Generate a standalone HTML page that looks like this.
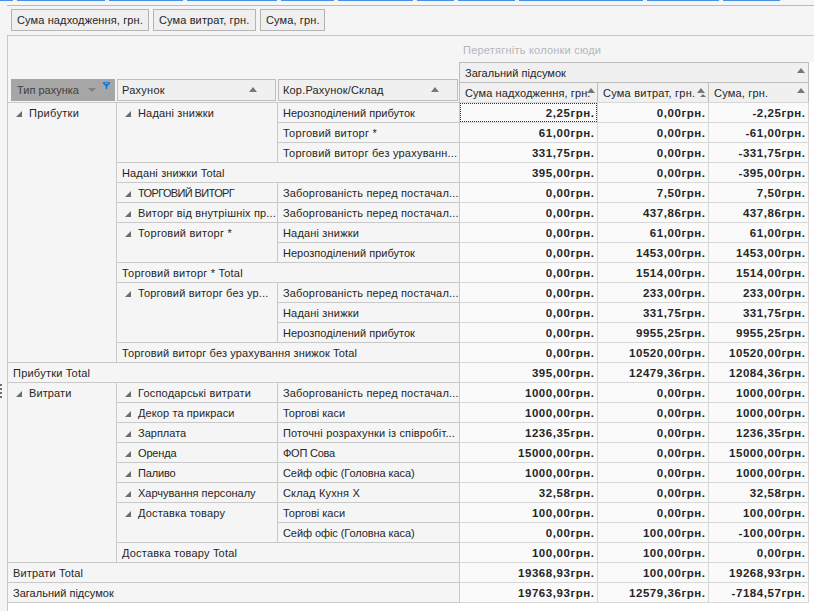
<!DOCTYPE html>
<html><head><meta charset="utf-8">
<style>
html,body{margin:0;padding:0}
body{width:814px;height:611px;position:relative;overflow:hidden;background:#f5f5f5;font-family:"Liberation Sans",sans-serif;font-size:11px;color:#262626}
div{position:absolute;box-sizing:border-box}
.l{}
.t{height:19px;line-height:21px;white-space:nowrap;letter-spacing:0.1px}
.n{height:19px;line-height:21px;white-space:nowrap;font-weight:bold;font-size:11.5px;letter-spacing:0.55px;margin-right:-0.55px}
.exw{width:6px;height:6px}
.ex{display:block}
.blue{top:0;height:1px;background:#4a91e2}
.btn{top:9px;height:22px;border:1px solid #b4b4b4;background:#efefef;line-height:20px;padding-left:5px;white-space:nowrap;letter-spacing:0.12px}
.hdr{height:22px;border:1px solid #bdbdbd;background:#f0f0f0;line-height:21px;padding-left:5px;white-space:nowrap}
.up{width:0;height:0;border-left:4.5px solid transparent;border-right:4.5px solid transparent;border-bottom:5px solid #777}
</style></head><body>
<div class="blue" style="left:0px;width:13px"></div>
<div class="blue" style="left:17px;width:88px"></div>
<div class="blue" style="left:109px;width:74px"></div>
<div class="blue" style="left:187px;width:90px"></div>
<div class="blue" style="left:281px;width:53px"></div>
<div class="blue" style="left:338px;width:75px"></div>
<div class="blue" style="left:417px;width:37px"></div>
<div class="blue" style="left:458px;width:57px"></div>
<div class="blue" style="left:519px;width:124px"></div>
<div class="blue" style="left:647px;width:72px"></div>
<div class="blue" style="left:723px;width:57px"></div>
<div style="left:7px;top:5px;width:807px;height:1px;background:#b9b9b9"></div>
<div class="btn" style="left:11px;width:138px">Сума надходження, грн.</div>
<div class="btn" style="left:153px;width:103px">Сума витрат, грн.</div>
<div class="btn" style="left:260px;width:65px">Сума, грн.</div>
<div style="left:7px;top:35px;width:807px;height:1px;background:#c8c8c8"></div>
<div style="left:7px;top:35px;width:1px;height:576px;background:#c8c8c8"></div>
<div style="left:8px;top:603px;width:806px;height:8px;background:#fff"></div>
<div style="left:809px;top:62px;width:5px;height:541px;background:#fff"></div>
<div style="left:460px;top:103px;width:348px;height:499px;background:#fafafa"></div>
<div style="left:463px;top:41px;line-height:19px;height:19px;color:#b6b6be;letter-spacing:0.22px;white-space:nowrap">Перетягніть колонки сюди</div>
<div style="left:11px;top:79px;width:104px;height:22px;background:#a6a6a6;line-height:22px;padding-left:6px;color:#404040">Тип рахунка</div>
<div style="left:88px;top:88px;width:0;height:0;border-left:4.5px solid transparent;border-right:4.5px solid transparent;border-top:4.7px solid #808080"></div>
<svg style="position:absolute;left:102px;top:81px" width="10" height="10" viewBox="0 0 10 10"><path d="M1.2 2.6 L7.8 2.6 L5.2 5.4 L3.8 5.4 Z" fill="#0f79d6"/><ellipse cx="4.5" cy="2.2" rx="3.7" ry="1.35" fill="#0f79d6"/><ellipse cx="4.5" cy="2.05" rx="2.2" ry="0.5" fill="#8dbbe8"/><rect x="3.8" y="5" width="1.4" height="3.1" fill="#0f79d6"/></svg>
<div class="hdr" style="left:117px;top:79px;width:159px;padding-left:4px;letter-spacing:0.25px">Рахунок</div>
<div class="up" style="left:249px;top:87px"></div>
<div class="hdr" style="left:278px;top:79px;width:180px;padding-left:4px;letter-spacing:0.17px">Кор.Рахунок/Склад</div>
<div class="up" style="left:431px;top:87px"></div>
<div style="left:459px;top:62px;width:350px;height:41px;background:#f0f0f0;border:1px solid #bdbdbd"></div>
<div style="left:459px;top:82px;width:350px;height:1px;background:#bdbdbd"></div>
<div style="left:597px;top:82px;width:1px;height:21px;background:#bdbdbd"></div>
<div style="left:708px;top:82px;width:1px;height:21px;background:#bdbdbd"></div>
<div class="t" style="left:465px;top:63px;letter-spacing:0.03px">Загальний підсумок</div>
<div class="up" style="left:797px;top:68px"></div>
<div class="t" style="left:465px;top:83px">Сума надходження, грн.</div>
<div class="up" style="left:587px;top:88px"></div>
<div class="t" style="left:603px;top:83px;letter-spacing:0.235px">Сума витрат, грн.</div>
<div class="up" style="left:697px;top:88px"></div>
<div style="left:699.5px;top:94px;width:0;height:0;border-left:3px solid transparent;border-right:3px solid transparent;border-bottom:3px solid #777"></div>
<div class="t" style="left:714px;top:83px;letter-spacing:0.2px">Сума, грн.</div>
<div class="up" style="left:797px;top:88px"></div>
<div style="left:0;top:384px;width:2px;height:2px;background:#707070"></div>
<div style="left:0;top:388px;width:2px;height:2px;background:#707070"></div>
<div style="left:0;top:392px;width:2px;height:2px;background:#707070"></div>
<div style="left:0;top:396px;width:2px;height:2px;background:#707070"></div>
<div class="l" style="left:7px;top:102px;width:453px;height:1px;background:#c9c9c9"></div>
<div class="l" style="left:460px;top:102px;width:349px;height:1px;background:#d7d7d7"></div>
<div class="l" style="left:277px;top:122px;width:183px;height:1px;background:#c9c9c9"></div>
<div class="l" style="left:460px;top:122px;width:349px;height:1px;background:#d7d7d7"></div>
<div class="l" style="left:277px;top:142px;width:183px;height:1px;background:#c9c9c9"></div>
<div class="l" style="left:460px;top:142px;width:349px;height:1px;background:#d7d7d7"></div>
<div class="l" style="left:116px;top:162px;width:344px;height:1px;background:#c9c9c9"></div>
<div class="l" style="left:460px;top:162px;width:349px;height:1px;background:#d7d7d7"></div>
<div class="l" style="left:116px;top:182px;width:344px;height:1px;background:#c9c9c9"></div>
<div class="l" style="left:460px;top:182px;width:349px;height:1px;background:#d7d7d7"></div>
<div class="l" style="left:116px;top:202px;width:344px;height:1px;background:#c9c9c9"></div>
<div class="l" style="left:460px;top:202px;width:349px;height:1px;background:#d7d7d7"></div>
<div class="l" style="left:116px;top:222px;width:344px;height:1px;background:#c9c9c9"></div>
<div class="l" style="left:460px;top:222px;width:349px;height:1px;background:#d7d7d7"></div>
<div class="l" style="left:277px;top:242px;width:183px;height:1px;background:#c9c9c9"></div>
<div class="l" style="left:460px;top:242px;width:349px;height:1px;background:#d7d7d7"></div>
<div class="l" style="left:116px;top:262px;width:344px;height:1px;background:#c9c9c9"></div>
<div class="l" style="left:460px;top:262px;width:349px;height:1px;background:#d7d7d7"></div>
<div class="l" style="left:116px;top:282px;width:344px;height:1px;background:#c9c9c9"></div>
<div class="l" style="left:460px;top:282px;width:349px;height:1px;background:#d7d7d7"></div>
<div class="l" style="left:277px;top:302px;width:183px;height:1px;background:#c9c9c9"></div>
<div class="l" style="left:460px;top:302px;width:349px;height:1px;background:#d7d7d7"></div>
<div class="l" style="left:277px;top:322px;width:183px;height:1px;background:#c9c9c9"></div>
<div class="l" style="left:460px;top:322px;width:349px;height:1px;background:#d7d7d7"></div>
<div class="l" style="left:116px;top:342px;width:344px;height:1px;background:#c9c9c9"></div>
<div class="l" style="left:460px;top:342px;width:349px;height:1px;background:#d7d7d7"></div>
<div class="l" style="left:7px;top:362px;width:453px;height:1px;background:#c9c9c9"></div>
<div class="l" style="left:460px;top:362px;width:349px;height:1px;background:#d7d7d7"></div>
<div class="l" style="left:7px;top:382px;width:453px;height:1px;background:#c9c9c9"></div>
<div class="l" style="left:460px;top:382px;width:349px;height:1px;background:#d7d7d7"></div>
<div class="l" style="left:116px;top:402px;width:344px;height:1px;background:#c9c9c9"></div>
<div class="l" style="left:460px;top:402px;width:349px;height:1px;background:#d7d7d7"></div>
<div class="l" style="left:116px;top:422px;width:344px;height:1px;background:#c9c9c9"></div>
<div class="l" style="left:460px;top:422px;width:349px;height:1px;background:#d7d7d7"></div>
<div class="l" style="left:116px;top:442px;width:344px;height:1px;background:#c9c9c9"></div>
<div class="l" style="left:460px;top:442px;width:349px;height:1px;background:#d7d7d7"></div>
<div class="l" style="left:116px;top:462px;width:344px;height:1px;background:#c9c9c9"></div>
<div class="l" style="left:460px;top:462px;width:349px;height:1px;background:#d7d7d7"></div>
<div class="l" style="left:116px;top:482px;width:344px;height:1px;background:#c9c9c9"></div>
<div class="l" style="left:460px;top:482px;width:349px;height:1px;background:#d7d7d7"></div>
<div class="l" style="left:116px;top:502px;width:344px;height:1px;background:#c9c9c9"></div>
<div class="l" style="left:460px;top:502px;width:349px;height:1px;background:#d7d7d7"></div>
<div class="l" style="left:277px;top:522px;width:183px;height:1px;background:#c9c9c9"></div>
<div class="l" style="left:460px;top:522px;width:349px;height:1px;background:#d7d7d7"></div>
<div class="l" style="left:116px;top:542px;width:344px;height:1px;background:#c9c9c9"></div>
<div class="l" style="left:460px;top:542px;width:349px;height:1px;background:#d7d7d7"></div>
<div class="l" style="left:7px;top:562px;width:453px;height:1px;background:#c9c9c9"></div>
<div class="l" style="left:460px;top:562px;width:349px;height:1px;background:#d7d7d7"></div>
<div class="l" style="left:7px;top:582px;width:453px;height:1px;background:#c9c9c9"></div>
<div class="l" style="left:460px;top:582px;width:349px;height:1px;background:#d7d7d7"></div>
<div class="l" style="left:7px;top:602px;width:453px;height:1px;background:#c9c9c9"></div>
<div class="l" style="left:460px;top:602px;width:349px;height:1px;background:#d7d7d7"></div>
<div class="l" style="left:7px;top:102px;width:1px;height:21px;background:#c9c9c9"></div>
<div class="l" style="left:116px;top:102px;width:1px;height:21px;background:#c9c9c9"></div>
<div class="l" style="left:277px;top:102px;width:1px;height:21px;background:#c9c9c9"></div>
<div class="l" style="left:459px;top:102px;width:1px;height:21px;background:#c8c8c8"></div>
<div class="l" style="left:597px;top:102px;width:1px;height:21px;background:#d7d7d7"></div>
<div class="l" style="left:708px;top:102px;width:1px;height:21px;background:#d7d7d7"></div>
<div class="l" style="left:808px;top:102px;width:1px;height:21px;background:#d7d7d7"></div>
<div class="l" style="left:7px;top:122px;width:1px;height:21px;background:#c9c9c9"></div>
<div class="l" style="left:116px;top:122px;width:1px;height:21px;background:#c9c9c9"></div>
<div class="l" style="left:277px;top:122px;width:1px;height:21px;background:#c9c9c9"></div>
<div class="l" style="left:459px;top:122px;width:1px;height:21px;background:#c8c8c8"></div>
<div class="l" style="left:597px;top:122px;width:1px;height:21px;background:#d7d7d7"></div>
<div class="l" style="left:708px;top:122px;width:1px;height:21px;background:#d7d7d7"></div>
<div class="l" style="left:808px;top:122px;width:1px;height:21px;background:#d7d7d7"></div>
<div class="l" style="left:7px;top:142px;width:1px;height:21px;background:#c9c9c9"></div>
<div class="l" style="left:116px;top:142px;width:1px;height:21px;background:#c9c9c9"></div>
<div class="l" style="left:277px;top:142px;width:1px;height:21px;background:#c9c9c9"></div>
<div class="l" style="left:459px;top:142px;width:1px;height:21px;background:#c8c8c8"></div>
<div class="l" style="left:597px;top:142px;width:1px;height:21px;background:#d7d7d7"></div>
<div class="l" style="left:708px;top:142px;width:1px;height:21px;background:#d7d7d7"></div>
<div class="l" style="left:808px;top:142px;width:1px;height:21px;background:#d7d7d7"></div>
<div class="l" style="left:7px;top:162px;width:1px;height:21px;background:#c9c9c9"></div>
<div class="l" style="left:116px;top:162px;width:1px;height:21px;background:#c9c9c9"></div>
<div class="l" style="left:459px;top:162px;width:1px;height:21px;background:#c8c8c8"></div>
<div class="l" style="left:597px;top:162px;width:1px;height:21px;background:#d7d7d7"></div>
<div class="l" style="left:708px;top:162px;width:1px;height:21px;background:#d7d7d7"></div>
<div class="l" style="left:808px;top:162px;width:1px;height:21px;background:#d7d7d7"></div>
<div class="l" style="left:7px;top:182px;width:1px;height:21px;background:#c9c9c9"></div>
<div class="l" style="left:116px;top:182px;width:1px;height:21px;background:#c9c9c9"></div>
<div class="l" style="left:277px;top:182px;width:1px;height:21px;background:#c9c9c9"></div>
<div class="l" style="left:459px;top:182px;width:1px;height:21px;background:#c8c8c8"></div>
<div class="l" style="left:597px;top:182px;width:1px;height:21px;background:#d7d7d7"></div>
<div class="l" style="left:708px;top:182px;width:1px;height:21px;background:#d7d7d7"></div>
<div class="l" style="left:808px;top:182px;width:1px;height:21px;background:#d7d7d7"></div>
<div class="l" style="left:7px;top:202px;width:1px;height:21px;background:#c9c9c9"></div>
<div class="l" style="left:116px;top:202px;width:1px;height:21px;background:#c9c9c9"></div>
<div class="l" style="left:277px;top:202px;width:1px;height:21px;background:#c9c9c9"></div>
<div class="l" style="left:459px;top:202px;width:1px;height:21px;background:#c8c8c8"></div>
<div class="l" style="left:597px;top:202px;width:1px;height:21px;background:#d7d7d7"></div>
<div class="l" style="left:708px;top:202px;width:1px;height:21px;background:#d7d7d7"></div>
<div class="l" style="left:808px;top:202px;width:1px;height:21px;background:#d7d7d7"></div>
<div class="l" style="left:7px;top:222px;width:1px;height:21px;background:#c9c9c9"></div>
<div class="l" style="left:116px;top:222px;width:1px;height:21px;background:#c9c9c9"></div>
<div class="l" style="left:277px;top:222px;width:1px;height:21px;background:#c9c9c9"></div>
<div class="l" style="left:459px;top:222px;width:1px;height:21px;background:#c8c8c8"></div>
<div class="l" style="left:597px;top:222px;width:1px;height:21px;background:#d7d7d7"></div>
<div class="l" style="left:708px;top:222px;width:1px;height:21px;background:#d7d7d7"></div>
<div class="l" style="left:808px;top:222px;width:1px;height:21px;background:#d7d7d7"></div>
<div class="l" style="left:7px;top:242px;width:1px;height:21px;background:#c9c9c9"></div>
<div class="l" style="left:116px;top:242px;width:1px;height:21px;background:#c9c9c9"></div>
<div class="l" style="left:277px;top:242px;width:1px;height:21px;background:#c9c9c9"></div>
<div class="l" style="left:459px;top:242px;width:1px;height:21px;background:#c8c8c8"></div>
<div class="l" style="left:597px;top:242px;width:1px;height:21px;background:#d7d7d7"></div>
<div class="l" style="left:708px;top:242px;width:1px;height:21px;background:#d7d7d7"></div>
<div class="l" style="left:808px;top:242px;width:1px;height:21px;background:#d7d7d7"></div>
<div class="l" style="left:7px;top:262px;width:1px;height:21px;background:#c9c9c9"></div>
<div class="l" style="left:116px;top:262px;width:1px;height:21px;background:#c9c9c9"></div>
<div class="l" style="left:459px;top:262px;width:1px;height:21px;background:#c8c8c8"></div>
<div class="l" style="left:597px;top:262px;width:1px;height:21px;background:#d7d7d7"></div>
<div class="l" style="left:708px;top:262px;width:1px;height:21px;background:#d7d7d7"></div>
<div class="l" style="left:808px;top:262px;width:1px;height:21px;background:#d7d7d7"></div>
<div class="l" style="left:7px;top:282px;width:1px;height:21px;background:#c9c9c9"></div>
<div class="l" style="left:116px;top:282px;width:1px;height:21px;background:#c9c9c9"></div>
<div class="l" style="left:277px;top:282px;width:1px;height:21px;background:#c9c9c9"></div>
<div class="l" style="left:459px;top:282px;width:1px;height:21px;background:#c8c8c8"></div>
<div class="l" style="left:597px;top:282px;width:1px;height:21px;background:#d7d7d7"></div>
<div class="l" style="left:708px;top:282px;width:1px;height:21px;background:#d7d7d7"></div>
<div class="l" style="left:808px;top:282px;width:1px;height:21px;background:#d7d7d7"></div>
<div class="l" style="left:7px;top:302px;width:1px;height:21px;background:#c9c9c9"></div>
<div class="l" style="left:116px;top:302px;width:1px;height:21px;background:#c9c9c9"></div>
<div class="l" style="left:277px;top:302px;width:1px;height:21px;background:#c9c9c9"></div>
<div class="l" style="left:459px;top:302px;width:1px;height:21px;background:#c8c8c8"></div>
<div class="l" style="left:597px;top:302px;width:1px;height:21px;background:#d7d7d7"></div>
<div class="l" style="left:708px;top:302px;width:1px;height:21px;background:#d7d7d7"></div>
<div class="l" style="left:808px;top:302px;width:1px;height:21px;background:#d7d7d7"></div>
<div class="l" style="left:7px;top:322px;width:1px;height:21px;background:#c9c9c9"></div>
<div class="l" style="left:116px;top:322px;width:1px;height:21px;background:#c9c9c9"></div>
<div class="l" style="left:277px;top:322px;width:1px;height:21px;background:#c9c9c9"></div>
<div class="l" style="left:459px;top:322px;width:1px;height:21px;background:#c8c8c8"></div>
<div class="l" style="left:597px;top:322px;width:1px;height:21px;background:#d7d7d7"></div>
<div class="l" style="left:708px;top:322px;width:1px;height:21px;background:#d7d7d7"></div>
<div class="l" style="left:808px;top:322px;width:1px;height:21px;background:#d7d7d7"></div>
<div class="l" style="left:7px;top:342px;width:1px;height:21px;background:#c9c9c9"></div>
<div class="l" style="left:116px;top:342px;width:1px;height:21px;background:#c9c9c9"></div>
<div class="l" style="left:459px;top:342px;width:1px;height:21px;background:#c8c8c8"></div>
<div class="l" style="left:597px;top:342px;width:1px;height:21px;background:#d7d7d7"></div>
<div class="l" style="left:708px;top:342px;width:1px;height:21px;background:#d7d7d7"></div>
<div class="l" style="left:808px;top:342px;width:1px;height:21px;background:#d7d7d7"></div>
<div class="l" style="left:7px;top:362px;width:1px;height:21px;background:#c9c9c9"></div>
<div class="l" style="left:459px;top:362px;width:1px;height:21px;background:#c8c8c8"></div>
<div class="l" style="left:597px;top:362px;width:1px;height:21px;background:#d7d7d7"></div>
<div class="l" style="left:708px;top:362px;width:1px;height:21px;background:#d7d7d7"></div>
<div class="l" style="left:808px;top:362px;width:1px;height:21px;background:#d7d7d7"></div>
<div class="l" style="left:7px;top:382px;width:1px;height:21px;background:#c9c9c9"></div>
<div class="l" style="left:116px;top:382px;width:1px;height:21px;background:#c9c9c9"></div>
<div class="l" style="left:277px;top:382px;width:1px;height:21px;background:#c9c9c9"></div>
<div class="l" style="left:459px;top:382px;width:1px;height:21px;background:#c8c8c8"></div>
<div class="l" style="left:597px;top:382px;width:1px;height:21px;background:#d7d7d7"></div>
<div class="l" style="left:708px;top:382px;width:1px;height:21px;background:#d7d7d7"></div>
<div class="l" style="left:808px;top:382px;width:1px;height:21px;background:#d7d7d7"></div>
<div class="l" style="left:7px;top:402px;width:1px;height:21px;background:#c9c9c9"></div>
<div class="l" style="left:116px;top:402px;width:1px;height:21px;background:#c9c9c9"></div>
<div class="l" style="left:277px;top:402px;width:1px;height:21px;background:#c9c9c9"></div>
<div class="l" style="left:459px;top:402px;width:1px;height:21px;background:#c8c8c8"></div>
<div class="l" style="left:597px;top:402px;width:1px;height:21px;background:#d7d7d7"></div>
<div class="l" style="left:708px;top:402px;width:1px;height:21px;background:#d7d7d7"></div>
<div class="l" style="left:808px;top:402px;width:1px;height:21px;background:#d7d7d7"></div>
<div class="l" style="left:7px;top:422px;width:1px;height:21px;background:#c9c9c9"></div>
<div class="l" style="left:116px;top:422px;width:1px;height:21px;background:#c9c9c9"></div>
<div class="l" style="left:277px;top:422px;width:1px;height:21px;background:#c9c9c9"></div>
<div class="l" style="left:459px;top:422px;width:1px;height:21px;background:#c8c8c8"></div>
<div class="l" style="left:597px;top:422px;width:1px;height:21px;background:#d7d7d7"></div>
<div class="l" style="left:708px;top:422px;width:1px;height:21px;background:#d7d7d7"></div>
<div class="l" style="left:808px;top:422px;width:1px;height:21px;background:#d7d7d7"></div>
<div class="l" style="left:7px;top:442px;width:1px;height:21px;background:#c9c9c9"></div>
<div class="l" style="left:116px;top:442px;width:1px;height:21px;background:#c9c9c9"></div>
<div class="l" style="left:277px;top:442px;width:1px;height:21px;background:#c9c9c9"></div>
<div class="l" style="left:459px;top:442px;width:1px;height:21px;background:#c8c8c8"></div>
<div class="l" style="left:597px;top:442px;width:1px;height:21px;background:#d7d7d7"></div>
<div class="l" style="left:708px;top:442px;width:1px;height:21px;background:#d7d7d7"></div>
<div class="l" style="left:808px;top:442px;width:1px;height:21px;background:#d7d7d7"></div>
<div class="l" style="left:7px;top:462px;width:1px;height:21px;background:#c9c9c9"></div>
<div class="l" style="left:116px;top:462px;width:1px;height:21px;background:#c9c9c9"></div>
<div class="l" style="left:277px;top:462px;width:1px;height:21px;background:#c9c9c9"></div>
<div class="l" style="left:459px;top:462px;width:1px;height:21px;background:#c8c8c8"></div>
<div class="l" style="left:597px;top:462px;width:1px;height:21px;background:#d7d7d7"></div>
<div class="l" style="left:708px;top:462px;width:1px;height:21px;background:#d7d7d7"></div>
<div class="l" style="left:808px;top:462px;width:1px;height:21px;background:#d7d7d7"></div>
<div class="l" style="left:7px;top:482px;width:1px;height:21px;background:#c9c9c9"></div>
<div class="l" style="left:116px;top:482px;width:1px;height:21px;background:#c9c9c9"></div>
<div class="l" style="left:277px;top:482px;width:1px;height:21px;background:#c9c9c9"></div>
<div class="l" style="left:459px;top:482px;width:1px;height:21px;background:#c8c8c8"></div>
<div class="l" style="left:597px;top:482px;width:1px;height:21px;background:#d7d7d7"></div>
<div class="l" style="left:708px;top:482px;width:1px;height:21px;background:#d7d7d7"></div>
<div class="l" style="left:808px;top:482px;width:1px;height:21px;background:#d7d7d7"></div>
<div class="l" style="left:7px;top:502px;width:1px;height:21px;background:#c9c9c9"></div>
<div class="l" style="left:116px;top:502px;width:1px;height:21px;background:#c9c9c9"></div>
<div class="l" style="left:277px;top:502px;width:1px;height:21px;background:#c9c9c9"></div>
<div class="l" style="left:459px;top:502px;width:1px;height:21px;background:#c8c8c8"></div>
<div class="l" style="left:597px;top:502px;width:1px;height:21px;background:#d7d7d7"></div>
<div class="l" style="left:708px;top:502px;width:1px;height:21px;background:#d7d7d7"></div>
<div class="l" style="left:808px;top:502px;width:1px;height:21px;background:#d7d7d7"></div>
<div class="l" style="left:7px;top:522px;width:1px;height:21px;background:#c9c9c9"></div>
<div class="l" style="left:116px;top:522px;width:1px;height:21px;background:#c9c9c9"></div>
<div class="l" style="left:277px;top:522px;width:1px;height:21px;background:#c9c9c9"></div>
<div class="l" style="left:459px;top:522px;width:1px;height:21px;background:#c8c8c8"></div>
<div class="l" style="left:597px;top:522px;width:1px;height:21px;background:#d7d7d7"></div>
<div class="l" style="left:708px;top:522px;width:1px;height:21px;background:#d7d7d7"></div>
<div class="l" style="left:808px;top:522px;width:1px;height:21px;background:#d7d7d7"></div>
<div class="l" style="left:7px;top:542px;width:1px;height:21px;background:#c9c9c9"></div>
<div class="l" style="left:116px;top:542px;width:1px;height:21px;background:#c9c9c9"></div>
<div class="l" style="left:459px;top:542px;width:1px;height:21px;background:#c8c8c8"></div>
<div class="l" style="left:597px;top:542px;width:1px;height:21px;background:#d7d7d7"></div>
<div class="l" style="left:708px;top:542px;width:1px;height:21px;background:#d7d7d7"></div>
<div class="l" style="left:808px;top:542px;width:1px;height:21px;background:#d7d7d7"></div>
<div class="l" style="left:7px;top:562px;width:1px;height:21px;background:#c9c9c9"></div>
<div class="l" style="left:459px;top:562px;width:1px;height:21px;background:#c8c8c8"></div>
<div class="l" style="left:597px;top:562px;width:1px;height:21px;background:#d7d7d7"></div>
<div class="l" style="left:708px;top:562px;width:1px;height:21px;background:#d7d7d7"></div>
<div class="l" style="left:808px;top:562px;width:1px;height:21px;background:#d7d7d7"></div>
<div class="l" style="left:7px;top:582px;width:1px;height:21px;background:#c9c9c9"></div>
<div class="l" style="left:459px;top:582px;width:1px;height:21px;background:#c8c8c8"></div>
<div class="l" style="left:597px;top:582px;width:1px;height:21px;background:#d7d7d7"></div>
<div class="l" style="left:708px;top:582px;width:1px;height:21px;background:#d7d7d7"></div>
<div class="l" style="left:808px;top:582px;width:1px;height:21px;background:#d7d7d7"></div>
<div class="exw" style="left:16px;top:111px"><svg class="ex" width="6" height="6" viewBox="0 0 6 6"><path d="M6 0V6H0Z" fill="#6d6d6d"/></svg></div>
<div class="t" style="left:29px;top:103px;letter-spacing:0.3px">Прибутки</div>
<div class="exw" style="left:125px;top:111px"><svg class="ex" width="6" height="6" viewBox="0 0 6 6"><path d="M6 0V6H0Z" fill="#6d6d6d"/></svg></div>
<div class="t" style="left:138px;top:103px;letter-spacing:0.17px">Надані знижки</div>
<div class="t" style="left:283px;top:103px;letter-spacing:0.02px">Нерозподілений прибуток</div>
<div class="n" style="right:220px;top:103px">2,25грн.</div>
<div class="n" style="right:109px;top:103px">0,00грн.</div>
<div class="n" style="right:9px;top:103px">-2,25грн.</div>
<div class="t" style="left:283px;top:123px;letter-spacing:0.26px">Торговий виторг *</div>
<div class="n" style="right:220px;top:123px">61,00грн.</div>
<div class="n" style="right:109px;top:123px">0,00грн.</div>
<div class="n" style="right:9px;top:123px">-61,00грн.</div>
<div class="t" style="left:283px;top:143px;letter-spacing:0.22px">Торговий виторг без урахуванн...</div>
<div class="n" style="right:220px;top:143px">331,75грн.</div>
<div class="n" style="right:109px;top:143px">0,00грн.</div>
<div class="n" style="right:9px;top:143px">-331,75грн.</div>
<div class="t" style="left:122px;top:163px;letter-spacing:0.14px">Надані знижки Total</div>
<div class="n" style="right:220px;top:163px">395,00грн.</div>
<div class="n" style="right:109px;top:163px">0,00грн.</div>
<div class="n" style="right:9px;top:163px">-395,00грн.</div>
<div class="exw" style="left:125px;top:191px"><svg class="ex" width="6" height="6" viewBox="0 0 6 6"><path d="M6 0V6H0Z" fill="#6d6d6d"/></svg></div>
<div class="t" style="left:138px;top:183px;letter-spacing:-0.63px">ТОРГОВИЙ ВИТОРГ</div>
<div class="t" style="left:283px;top:183px;letter-spacing:0.17px">Заборгованість перед постачал...</div>
<div class="n" style="right:220px;top:183px">0,00грн.</div>
<div class="n" style="right:109px;top:183px">7,50грн.</div>
<div class="n" style="right:9px;top:183px">7,50грн.</div>
<div class="exw" style="left:125px;top:211px"><svg class="ex" width="6" height="6" viewBox="0 0 6 6"><path d="M6 0V6H0Z" fill="#6d6d6d"/></svg></div>
<div class="t" style="left:138px;top:203px;letter-spacing:0.16px">Виторг від внутрішніх пр...</div>
<div class="t" style="left:283px;top:203px;letter-spacing:0.17px">Заборгованість перед постачал...</div>
<div class="n" style="right:220px;top:203px">0,00грн.</div>
<div class="n" style="right:109px;top:203px">437,86грн.</div>
<div class="n" style="right:9px;top:203px">437,86грн.</div>
<div class="exw" style="left:125px;top:231px"><svg class="ex" width="6" height="6" viewBox="0 0 6 6"><path d="M6 0V6H0Z" fill="#6d6d6d"/></svg></div>
<div class="t" style="left:138px;top:223px;letter-spacing:0.26px">Торговий виторг *</div>
<div class="t" style="left:283px;top:223px;letter-spacing:0.17px">Надані знижки</div>
<div class="n" style="right:220px;top:223px">0,00грн.</div>
<div class="n" style="right:109px;top:223px">61,00грн.</div>
<div class="n" style="right:9px;top:223px">61,00грн.</div>
<div class="t" style="left:283px;top:243px;letter-spacing:0.02px">Нерозподілений прибуток</div>
<div class="n" style="right:220px;top:243px">0,00грн.</div>
<div class="n" style="right:109px;top:243px">1453,00грн.</div>
<div class="n" style="right:9px;top:243px">1453,00грн.</div>
<div class="t" style="left:122px;top:263px;letter-spacing:0.21px">Торговий виторг * Total</div>
<div class="n" style="right:220px;top:263px">0,00грн.</div>
<div class="n" style="right:109px;top:263px">1514,00грн.</div>
<div class="n" style="right:9px;top:263px">1514,00грн.</div>
<div class="exw" style="left:125px;top:291px"><svg class="ex" width="6" height="6" viewBox="0 0 6 6"><path d="M6 0V6H0Z" fill="#6d6d6d"/></svg></div>
<div class="t" style="left:138px;top:283px;letter-spacing:0.17px">Торговий виторг без ур...</div>
<div class="t" style="left:283px;top:283px;letter-spacing:0.17px">Заборгованість перед постачал...</div>
<div class="n" style="right:220px;top:283px">0,00грн.</div>
<div class="n" style="right:109px;top:283px">233,00грн.</div>
<div class="n" style="right:9px;top:283px">233,00грн.</div>
<div class="t" style="left:283px;top:303px;letter-spacing:0.17px">Надані знижки</div>
<div class="n" style="right:220px;top:303px">0,00грн.</div>
<div class="n" style="right:109px;top:303px">331,75грн.</div>
<div class="n" style="right:9px;top:303px">331,75грн.</div>
<div class="t" style="left:283px;top:323px;letter-spacing:0.02px">Нерозподілений прибуток</div>
<div class="n" style="right:220px;top:323px">0,00грн.</div>
<div class="n" style="right:109px;top:323px">9955,25грн.</div>
<div class="n" style="right:9px;top:323px">9955,25грн.</div>
<div class="t" style="left:122px;top:343px;letter-spacing:0.14px">Торговий виторг без урахування знижок Total</div>
<div class="n" style="right:220px;top:343px">0,00грн.</div>
<div class="n" style="right:109px;top:343px">10520,00грн.</div>
<div class="n" style="right:9px;top:343px">10520,00грн.</div>
<div class="t" style="left:13px;top:363px;letter-spacing:0.23px">Прибутки Total</div>
<div class="n" style="right:220px;top:363px">395,00грн.</div>
<div class="n" style="right:109px;top:363px">12479,36грн.</div>
<div class="n" style="right:9px;top:363px">12084,36грн.</div>
<div class="exw" style="left:16px;top:391px"><svg class="ex" width="6" height="6" viewBox="0 0 6 6"><path d="M6 0V6H0Z" fill="#6d6d6d"/></svg></div>
<div class="t" style="left:29px;top:383px;letter-spacing:0.1px">Витрати</div>
<div class="exw" style="left:125px;top:391px"><svg class="ex" width="6" height="6" viewBox="0 0 6 6"><path d="M6 0V6H0Z" fill="#6d6d6d"/></svg></div>
<div class="t" style="left:138px;top:383px;letter-spacing:0.2px">Господарські витрати</div>
<div class="t" style="left:283px;top:383px;letter-spacing:0.17px">Заборгованість перед постачал...</div>
<div class="n" style="right:220px;top:383px">1000,00грн.</div>
<div class="n" style="right:109px;top:383px">0,00грн.</div>
<div class="n" style="right:9px;top:383px">1000,00грн.</div>
<div class="exw" style="left:125px;top:411px"><svg class="ex" width="6" height="6" viewBox="0 0 6 6"><path d="M6 0V6H0Z" fill="#6d6d6d"/></svg></div>
<div class="t" style="left:138px;top:403px;letter-spacing:0.1px">Декор та прикраси</div>
<div class="t" style="left:283px;top:403px;letter-spacing:-0.01px">Торгові каси</div>
<div class="n" style="right:220px;top:403px">1000,00грн.</div>
<div class="n" style="right:109px;top:403px">0,00грн.</div>
<div class="n" style="right:9px;top:403px">1000,00грн.</div>
<div class="exw" style="left:125px;top:431px"><svg class="ex" width="6" height="6" viewBox="0 0 6 6"><path d="M6 0V6H0Z" fill="#6d6d6d"/></svg></div>
<div class="t" style="left:138px;top:423px;letter-spacing:0.0px">Зарплата</div>
<div class="t" style="left:283px;top:423px;letter-spacing:0.16px">Поточні розрахунки із співробіт...</div>
<div class="n" style="right:220px;top:423px">1236,35грн.</div>
<div class="n" style="right:109px;top:423px">0,00грн.</div>
<div class="n" style="right:9px;top:423px">1236,35грн.</div>
<div class="exw" style="left:125px;top:451px"><svg class="ex" width="6" height="6" viewBox="0 0 6 6"><path d="M6 0V6H0Z" fill="#6d6d6d"/></svg></div>
<div class="t" style="left:138px;top:443px;letter-spacing:-0.18px">Оренда</div>
<div class="t" style="left:283px;top:443px;letter-spacing:-0.24px">ФОП Сова</div>
<div class="n" style="right:220px;top:443px">15000,00грн.</div>
<div class="n" style="right:109px;top:443px">0,00грн.</div>
<div class="n" style="right:9px;top:443px">15000,00грн.</div>
<div class="exw" style="left:125px;top:471px"><svg class="ex" width="6" height="6" viewBox="0 0 6 6"><path d="M6 0V6H0Z" fill="#6d6d6d"/></svg></div>
<div class="t" style="left:138px;top:463px;letter-spacing:-0.17px">Паливо</div>
<div class="t" style="left:283px;top:463px;letter-spacing:-0.08px">Сейф офіс (Головна каса)</div>
<div class="n" style="right:220px;top:463px">1000,00грн.</div>
<div class="n" style="right:109px;top:463px">0,00грн.</div>
<div class="n" style="right:9px;top:463px">1000,00грн.</div>
<div class="exw" style="left:125px;top:491px"><svg class="ex" width="6" height="6" viewBox="0 0 6 6"><path d="M6 0V6H0Z" fill="#6d6d6d"/></svg></div>
<div class="t" style="left:138px;top:483px;letter-spacing:0.0px">Харчування персоналу</div>
<div class="t" style="left:283px;top:483px;letter-spacing:0.17px">Склад Кухня Х</div>
<div class="n" style="right:220px;top:483px">32,58грн.</div>
<div class="n" style="right:109px;top:483px">0,00грн.</div>
<div class="n" style="right:9px;top:483px">32,58грн.</div>
<div class="exw" style="left:125px;top:511px"><svg class="ex" width="6" height="6" viewBox="0 0 6 6"><path d="M6 0V6H0Z" fill="#6d6d6d"/></svg></div>
<div class="t" style="left:138px;top:503px;letter-spacing:0.16px">Доставка товару</div>
<div class="t" style="left:283px;top:503px;letter-spacing:-0.01px">Торгові каси</div>
<div class="n" style="right:220px;top:503px">100,00грн.</div>
<div class="n" style="right:109px;top:503px">0,00грн.</div>
<div class="n" style="right:9px;top:503px">100,00грн.</div>
<div class="t" style="left:283px;top:523px;letter-spacing:-0.08px">Сейф офіс (Головна каса)</div>
<div class="n" style="right:220px;top:523px">0,00грн.</div>
<div class="n" style="right:109px;top:523px">100,00грн.</div>
<div class="n" style="right:9px;top:523px">-100,00грн.</div>
<div class="t" style="left:122px;top:543px;letter-spacing:0.2px">Доставка товару Total</div>
<div class="n" style="right:220px;top:543px">100,00грн.</div>
<div class="n" style="right:109px;top:543px">100,00грн.</div>
<div class="n" style="right:9px;top:543px">0,00грн.</div>
<div class="t" style="left:13px;top:563px;letter-spacing:0.16px">Витрати Total</div>
<div class="n" style="right:220px;top:563px">19368,93грн.</div>
<div class="n" style="right:109px;top:563px">100,00грн.</div>
<div class="n" style="right:9px;top:563px">19268,93грн.</div>
<div class="t" style="left:13px;top:583px;letter-spacing:0.02px">Загальний підсумок</div>
<div class="n" style="right:220px;top:583px">19763,93грн.</div>
<div class="n" style="right:109px;top:583px">12579,36грн.</div>
<div class="n" style="right:9px;top:583px">-7184,57грн.</div>
<div style="left:460px;top:103px;width:137px;height:19px;border:1px dotted #333"></div>
</body></html>
